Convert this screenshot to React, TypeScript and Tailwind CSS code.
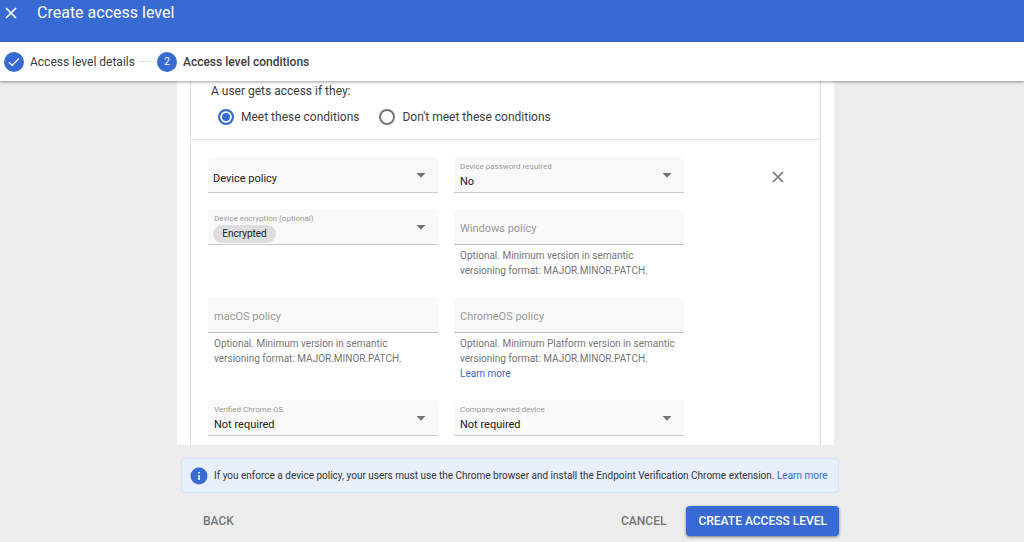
import { FC, ReactNode, useState } from 'react';

const CloseIcon: FC<{ className?: string }> = ({ className }) => (
  <svg
    viewBox="0 0 12 12"
    className={className}
    fill="none"
    stroke="currentColor"
    aria-hidden="true"
  >
    <path d="M1 1L11 11M11 1L1 11" strokeWidth="1.7" />
  </svg>
);

const Caret = () => (
  <svg
    viewBox="0 0 10 5"
    className="pointer-events-none col-start-1 row-start-1 mr-3 mt-0.5 h-[5px] w-2.5 self-center justify-self-end"
    aria-hidden="true"
  >
    <path d="M0.5 0H9.5L5 4.8Z" fill="#737373" />
  </svg>
);

interface SelectFieldProps {
  id: string;
  label: string;
  options: string[];
  hideLabel?: boolean;
  chip?: boolean;
}

const SelectField: FC<SelectFieldProps> = (props) => {
  const { id, label, options, hideLabel, chip } = props;

  let selectClass = 'px-1.5 pt-3.5 h-full w-full text-[11px]';
  if (hideLabel) selectClass = 'px-[5px] pt-2 h-full w-full text-[11px]';
  if (chip)
    selectClass =
      'ml-[5px] h-[18px] w-[63px] self-end mb-px rounded-full bg-[#dedede] text-center text-[10px]';

  return (
    <div className="grid h-9 rounded-t-sm border-b border-[#c9c9c9] bg-[#f9f9f9]">
      {!hideLabel && (
        <label
          htmlFor={id}
          className="pointer-events-none col-start-1 row-start-1 self-start pl-1.5 pt-[5px] text-[8px] leading-[10px] text-[#9a9a9a]"
        >
          {label}
        </label>
      )}
      <select
        id={id}
        aria-label={hideLabel ? label : undefined}
        className={`col-start-1 row-start-1 appearance-none leading-4 text-[#212121] ${selectClass}`}
      >
        {options.map((option) => (
          <option key={option}>{option}</option>
        ))}
      </select>
      <Caret />
    </div>
  );
};

interface TextFieldProps {
  id: string;
  label: string;
  children: ReactNode;
}

const TextField: FC<TextFieldProps> = ({ id, label, children }) => (
  <div>
    <input
      id={id}
      type="text"
      aria-label={label}
      aria-describedby={`${id}-help`}
      placeholder={label}
      className="block h-9 w-full rounded-t-sm border-b border-[#c0c0c0] bg-[#f9f9f9] px-1.5 pt-1 text-[11px] text-[#212121] placeholder:text-[#999999]"
    />
    <p
      id={`${id}-help`}
      className="px-1.5 py-[3px] text-[10px] leading-[15px] text-[#757575]"
    >
      {children}
    </p>
  </div>
);

const radioClass =
  'size-4 appearance-none rounded-full border-2 border-[#757575] checked:border-[#376ad3] checked:bg-[#376ad3] checked:shadow-[inset_0_0_0_2px_white]';

const App = () => {
  const [match, setMatch] = useState('meet');

  return (
    <div className="flex min-h-screen flex-col bg-[#ededed] font-['Roboto',sans-serif] text-[#3c3c3c]">
      <header className="flex h-[42px] items-start bg-[#376ad3] pl-[5px] pt-[3px] text-white">
        <button type="button" aria-label="Close" className="py-1">
          <CloseIcon className="size-3" />
        </button>
        <h1 className="pl-5 text-base leading-5">Create access level</h1>
      </header>

      <ol className="relative z-10 flex h-[39px] items-center bg-white pl-1 text-xs shadow-[0_1px_3px_rgba(0,0,0,0.4)]">
        <li className="flex items-center">
          <span className="flex size-5 items-center justify-center rounded-full bg-[#376ad3]">
            <svg
              viewBox="0 0 12 10"
              className="h-2.5 w-3"
              fill="none"
              aria-hidden="true"
            >
              <path d="M1 5.2L4.2 8.4L11 1.4" stroke="white" strokeWidth="1.3" />
            </svg>
          </span>
          <span className="pl-1.5">Access level details</span>
          <span className="ml-1 mr-1.5 h-px w-3 bg-[#dcdcdc]" />
        </li>
        <li className="flex items-center font-medium" aria-current="step">
          <span className="flex size-5 items-center justify-center rounded-full bg-[#376ad3] text-[10px] font-normal text-white">
            2
          </span>
          <span className="pl-1.5">Access level conditions</span>
        </li>
      </ol>

      <main className="ml-[177px] mr-[190px] bg-white px-[13px]">
        <div className="border-x border-[#e0e0e0]">
          <fieldset className="border-b border-[#e0e0e0] pb-3.5 pl-5 pt-0.5 text-xs leading-4">
            <legend className="float-left w-full">
              A user gets access if they:
            </legend>
            <div className="clear-both flex gap-5 pl-[7px] pt-2.5">
              <label className="flex items-center gap-[7px]">
                <input
                  type="radio"
                  name="match"
                  className={radioClass}
                  checked={match === 'meet'}
                  onChange={() => setMatch('meet')}
                />
                Meet these conditions
              </label>
              <label className="flex items-center gap-[7px]">
                <input
                  type="radio"
                  name="match"
                  className={radioClass}
                  checked={match === 'dont'}
                  onChange={() => setMatch('dont')}
                />
                Don't meet these conditions
              </label>
            </div>
          </fieldset>

          <div className="flex items-start pb-[9px] pl-[17px] pt-[17px]">
            <div className="grid flex-1 grid-cols-2 gap-4">
              <SelectField
                id="attribute"
                label="Attribute"
                options={['Device policy', 'IP subnetworks', 'Location']}
                hideLabel
              />
              <SelectField
                id="password"
                label="Device password required"
                options={['No', 'Yes']}
              />
              <SelectField
                id="encryption"
                label="Device encryption (optional)"
                options={['Encrypted', 'Unencrypted']}
                chip
              />
              <TextField id="windows" label="Windows policy">
                Optional. Minimum version in semantic
                <br />
                versioning format: MAJOR.MINOR.PATCH.
              </TextField>
              <TextField id="macos" label="macOS policy">
                Optional. Minimum version in semantic
                <br />
                versioning format: MAJOR.MINOR.PATCH.
              </TextField>
              <TextField id="chromeos" label="ChromeOS policy">
                Optional. Minimum Platform version in semantic
                <br />
                versioning format: MAJOR.MINOR.PATCH.
                <br />
                <a href="#chromeos-help" className="text-[#376ad3]">
                  Learn more
                </a>
              </TextField>
              <SelectField
                id="verified"
                label="Verified Chrome OS"
                options={['Not required', 'Required']}
              />
              <SelectField
                id="company"
                label="Company-owned device"
                options={['Not required', 'Required']}
              />
            </div>
            <div className="flex w-[136px] justify-end pr-9 pt-3.5">
              <button
                type="button"
                aria-label="Remove condition"
                className="text-[#757575]"
              >
                <CloseIcon className="size-3" />
              </button>
            </div>
          </div>
        </div>
      </main>

      <footer className="ml-[181px] mr-[185px] pt-[13px]">
        <div className="flex h-[35px] items-center gap-1.5 rounded border border-[#d2e3fc] bg-[#e8effd] pl-2 text-[10px] text-[#333333]">
          <svg viewBox="0 0 18 18" className="size-[18px]" aria-hidden="true">
            <circle cx="9" cy="9" r="8.5" fill="#376ad3" />
            <path d="M8.2 5H9.8V6.6H8.2ZM8.2 8H9.8V13H8.2Z" fill="white" />
          </svg>
          <p>
            If you enforce a device policy, your users must use the Chrome
            browser and install the Endpoint Verification Chrome extension.{' '}
            <a href="#endpoint-verification" className="text-[#376ad3]">
              Learn more
            </a>
          </p>
        </div>
        <div className="flex items-center pb-1.5 pt-[13px] text-xs font-medium text-[#757575]">
          <button type="button" className="ml-[22px]">
            BACK
          </button>
          <button type="button" className="ml-auto mr-5">
            CANCEL
          </button>
          <button
            type="button"
            className="h-[30px] rounded-sm bg-[#376ad3] px-3 text-white shadow-[0_1px_3px_rgba(0,0,0,0.5)]"
          >
            CREATE ACCESS LEVEL
          </button>
        </div>
      </footer>
    </div>
  );
};

export default App;
